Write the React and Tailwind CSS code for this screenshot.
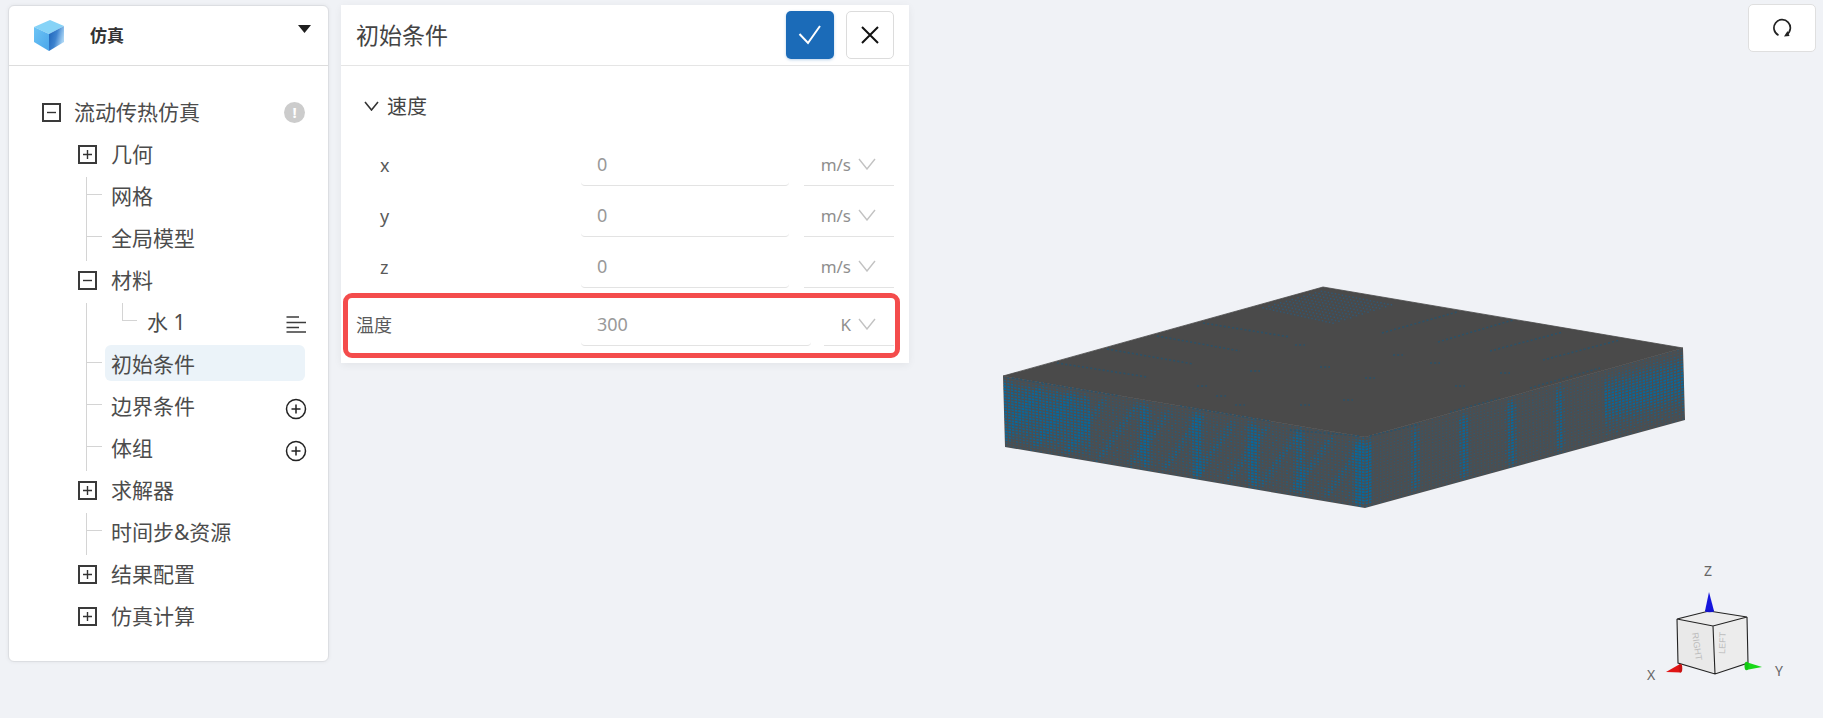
import React from "react";

const FONT = { fontFamily: '"Noto Sans","Noto Sans CJK SC",sans-serif' };

function lerp(a, b, t) { return [a[0] + (b[0] - a[0]) * t, a[1] + (b[1] - a[1]) * t]; }
function bump(u, c, w) { const d = (u - c) / w; return Math.exp(-d * d); }

function buildFace(tl, tr, br, bl, nu, nv, fn) {
  const levels = [[], [], [], []];
  for (let i = 0; i < nu; i++) {
    for (let j = 0; j < nv; j++) {
      const u0 = i / nu, u1 = (i + 1) / nu, v0 = j / nv, v1 = (j + 1) / nv;
      const um = (u0 + u1) / 2, vm = (v0 + v1) / 2;
      const wave = Math.sin(i * 2.39) * Math.cos(j * 1.7);
      const s = Math.max(0, Math.min(1, fn(um, vm) + wave * 0.08));
      const gu = (u1 - u0) * (0.42 - 0.34 * Math.sqrt(s));
      const gv = (v1 - v0) * (0.43 - 0.3 * Math.sqrt(s));
      const q = (u, v) => { const p = lerp(lerp(tl, tr, u), lerp(bl, br, u), v); return p[0].toFixed(1) + " " + p[1].toFixed(1); };
      const d = "M" + q(u0 + gu, v0 + gv) + "L" + q(u1 - gu, v0 + gv) + "L" + q(u1 - gu, v1 - gv) + "L" + q(u0 + gu, v1 - gv) + "Z";
      levels[s > 0.6 ? 3 : s > 0.42 ? 2 : s > 0.25 ? 1 : 0].push(d);
    }
  }
  return levels.map((l) => l.join(""));
}

const leftFn = (u, v) => {
  const edge = Math.min(1, 0.25 + v * 5) * Math.min(1, 0.3 + (1 - v) * 6);
  let b = 0.22 + 0.26 * Math.pow(Math.max(0, Math.sin(u * 70 + v * 9)), 3);
  if (u < 0.24) b += 0.42 * bump(v, 0.42, 0.45);
  b += 0.45 * bump(u, 0.39, 0.014) + 0.55 * bump(u, 0.535, 0.014) + 0.55 * bump(u, 0.69, 0.014) + 0.4 * bump(u, 0.82, 0.014) + 0.65 * bump(u, 0.985, 0.016);
  return b * edge;
};
const rightFn = (u, v) => {
  const edge = Math.min(1, 0.25 + v * 5) * Math.min(1, 0.3 + (1 - v) * 6);
  let b = 0.16;
  b += 0.45 * bump(u, 0.157, 0.013) + 0.55 * bump(u, 0.31, 0.013) + 0.55 * bump(u, 0.46, 0.013) + 0.45 * bump(u, 0.61, 0.013);
  if (u > 0.75) b += 0.52 * bump(v, 0.45, 0.32);
  if (u < 0.02) b += 0.55;
  return b * edge;
};

const LEFT = buildFace([1003, 376], [1365, 437], [1365, 508], [1005, 447], 104, 25, leftFn);
const RIGHT = buildFace([1365, 437], [1683, 348], [1685, 420], [1365, 508], 92, 25, rightFn);
const OP = [0.4, 0.65, 0.9, 1];

const DASHES = [
  [1057, 363, 1147, 377], [1107, 349, 1193, 364], [1157, 336, 1240, 351], [1203, 323, 1290, 337],
  [1382, 333, 1457, 312], [1438, 342, 1513, 320], [1490, 351, 1563, 332], [1543, 360, 1620, 340],
  [1012, 378, 1120, 396], [1180, 406, 1270, 421], [1290, 430, 1360, 436], [1370, 436, 1420, 424],
  [1450, 412, 1500, 398], [1530, 388, 1600, 368],
];
const SPECKS = [
  [1295, 345], [1393, 355], [1320, 367], [1365, 378], [1343, 400], [1430, 363], [1455, 386], [1500, 373], [1250, 371], [1197, 386], [1216, 396], [1300, 405], [1235, 405],
];

function diamondDots() {
  const out = [];
  const a = [1323, 288], b = [1400, 303], c = [1330, 325], d = [1253, 308];
  for (let i = 1; i < 22; i++) for (let j = 1; j < 12; j++) {
    const p = lerp(lerp(a, b, i / 22), lerp(d, c, i / 22), j / 12);
    out.push("M" + p[0].toFixed(1) + " " + p[1].toFixed(1) + "h1.5v1.5h-1.5z");
  }
  return out.join("");
}
const DOTS = diamondDots();

function Viewport() {
  return (
    <svg viewBox="909 0 914 718" className="absolute inset-0 w-[914px] h-[718px]">
      <polygon points="1003,376 1365,437 1365,508 1005,447" fill="#4c4e50" />
      <polygon points="1365,437 1683,348 1685,420 1365,508" fill="#4c4e50" />
      {LEFT.map((d, i) => <path key={i} d={d} fill="#05699f" opacity={OP[i]} />)}
      {RIGHT.map((d, i) => <path key={i} d={d} fill="#05699f" opacity={OP[i]} />)}
      <polygon points="1003,376 1323,287 1683,348 1365,437" fill="#4a4a4a" stroke="#4a4a4a" strokeWidth="0.8" />
      <path d={DOTS} fill="#2b5b7d" opacity="0.8" />
      {DASHES.map((l, i) => (
        <line key={i} x1={l[0]} y1={l[1]} x2={l[2]} y2={l[3]} stroke="#2b5269" strokeWidth="1.6" strokeDasharray="2 2.2" />
      ))}
      {SPECKS.map((p, i) => (
        <path key={i} d={`M${p[0]} ${p[1]}h10`} stroke="#2b5269" strokeWidth="1.6" strokeDasharray="2 2.2" />
      ))}

      {/* orientation cube */}
      <polygon points="1677,619 1709,611 1747,617 1713,626" fill="#ececec" />
      <polygon points="1677,619 1713,626 1715,674 1678,663" fill="#e9e9e9" />
      <polygon points="1713,626 1747,617 1748,663 1715,674" fill="#ececec" />
      <path d="M1677 619L1709 611L1747 617L1713 626ZM1677 619L1678 663L1715 674L1748 663L1747 617M1713 626L1715 674" fill="none" stroke="#222" strokeWidth="1.1" />
      <text transform="translate(1692,633) rotate(82)" fontSize="9" fill="#bdbdbd" fontFamily='"Liberation Sans",sans-serif'>RIGHT</text>
      <text transform="translate(1725,654) rotate(-88)" fontSize="9" fill="#bdbdbd" fontFamily='"Liberation Sans",sans-serif'>LEFT</text>
      <polygon points="1709,592 1705,611 1714,611" fill="#1515dd" />
      <ellipse cx="1709.5" cy="611" rx="4.5" ry="1.2" fill="#1212c8" />
      <polygon points="1666,672 1680,664 1681,672.5" fill="#e01515" />
      <ellipse cx="1680.5" cy="668.3" rx="1.8" ry="4.3" fill="#c81212" />
      <polygon points="1762,667 1746,662 1746,670" fill="#18d818" />
      <ellipse cx="1746.5" cy="666" rx="2" ry="4.2" fill="#14c814" />
      <text x="1708" y="576" fontSize="14" fill="#666" textAnchor="middle" fontFamily='"Noto Sans",sans-serif'>Z</text>
      <text x="1651" y="680" fontSize="14" fill="#666" textAnchor="middle" fontFamily='"Noto Sans",sans-serif'>X</text>
      <text x="1779" y="676" fontSize="14" fill="#666" textAnchor="middle" fontFamily='"Noto Sans",sans-serif'>Y</text>
    </svg>
  );
}

function Logo() {
  return (
    <svg width="32" height="33" viewBox="0 0 32 33" className="shrink-0">
      <defs>
        <linearGradient id="lg1" x1="0" y1="0" x2="1" y2="1">
          <stop offset="0" stopColor="#6cc4f5" />
          <stop offset="1" stopColor="#4ba6ea" />
        </linearGradient>
        <linearGradient id="lg2" x1="0" y1="0" x2="1" y2="0.4">
          <stop offset="0" stopColor="#1b62b8" />
          <stop offset="0.55" stopColor="#3d83cf" />
          <stop offset="1" stopColor="#a9d4f4" />
        </linearGradient>
      </defs>
      <polygon points="1,8 17,1 31,7 16,15" fill="#86d3f7" />
      <polygon points="1,8 16,15 16,32 1,23" fill="url(#lg1)" />
      <polygon points="16,15 31,7 31,23 16,32" fill="url(#lg2)" />
    </svg>
  );
}

function BoxIcon({ plus }) {
  return (
    <span className="w-[19px] h-[19px] border-2 border-[#3a3a3a] shrink-0 flex items-center justify-center">
      <svg width="11" height="11" viewBox="0 0 11 11">
        <path d={plus ? "M1 5.5H10M5.5 1V10" : "M1 5.5H10"} stroke="#333" strokeWidth="1.4" />
      </svg>
    </span>
  );
}

function PlusCircle() {
  return (
    <svg width="22" height="22" viewBox="0 0 22 22" className="shrink-0 translate-y-[4px] -mr-[2px]">
      <circle cx="11" cy="11" r="9.5" fill="none" stroke="#222" strokeWidth="1.5" />
      <path d="M6.5 11H15.5M11 6.5V15.5" stroke="#222" strokeWidth="1.5" />
    </svg>
  );
}

const LABEL = "text-[21px] leading-[42px] text-[#4c4c4c] whitespace-nowrap";

function Branch({ label, open }) {
  return (
    <div className="flex items-center h-[42px] pl-[69px] pr-[23px]">
      <BoxIcon plus={!open} />
      <span className={LABEL + " ml-[14px]"}>{label}</span>
    </div>
  );
}

function Leaf({ label, selected, extra }) {
  return (
    <div className="flex items-center h-[42px]">
      <span className="w-[15px] h-px bg-[#d4d4d4] shrink-0 -translate-y-[4px]"></span>
      <div className={"flex items-center justify-between flex-1 h-[36px] ml-[3px] pl-[6px] rounded-[6px] -translate-y-[3px] " + (selected ? "bg-[#ebf3f9]" : "")}>
        <span className={LABEL + " translate-y-[1px]"}>{label}</span>
        {extra}
      </div>
    </div>
  );
}

function Group({ children }) {
  return <div className="ml-[77px] mr-[23px] border-l border-[#d4d4d4] relative top-[2px]">{children}</div>;
}

function Sidebar() {
  return (
    <aside className="w-[321px] h-[657px] shrink-0 mt-[5px] ml-[8px] bg-white rounded-[6px] border border-[#dcdee2] shadow-[0_0_4px_rgba(0,0,0,0.06)]">
      <div className="h-[60px] border-b border-[#dddddd] flex items-center pl-[24px] relative rounded-t-[6px]">
        <Logo />
        <span className="ml-[25px] text-[17px] font-bold text-[#333]">仿真</span>
        <svg width="13" height="8" viewBox="0 0 13 8" className="absolute right-[17px] top-[19px]">
          <polygon points="0,0 13,0 6.5,8" fill="#1e1e1e" />
        </svg>
      </div>
      <div className="pt-[25px]">
        <div className="flex items-center h-[42px] pl-[33px] pr-[23px]">
          <BoxIcon plus={false} />
          <span className={LABEL + " ml-[13px] flex-1"}>流动传热仿真</span>
          <span className="w-[21px] h-[21px] rounded-full bg-[#cccccc] text-white text-[15px] font-bold flex items-center justify-center leading-none">!</span>
        </div>
        <div>
          <Branch label="几何" open={false} />
          <Group>
            <Leaf label="网格" />
            <Leaf label="全局模型" />
          </Group>
          <Branch label="材料" open />
          <Group>
            <div className="flex items-center h-[42px] pl-[35px] relative">
              <span className="absolute left-[35px] top-0 w-[15px] h-[18px] border-l border-b border-[#d4d4d4]"></span>
              <span className={LABEL + " ml-[25px] flex-1 -translate-y-[2px]"}>水 1</span>
              <svg width="20" height="17" viewBox="0 0 20 17" className="shrink-0 -mr-[1px]">
                <path d="M0.5 1H13M0.5 6.5H20M0.5 11.5H13M0.5 16H20" stroke="#3c3c3c" strokeWidth="1.5" fill="none" />
              </svg>
            </div>
            <Leaf label="初始条件" selected />
            <Leaf label="边界条件" extra={<PlusCircle />} />
            <Leaf label="体组" extra={<PlusCircle />} />
          </Group>
          <Branch label="求解器" open={false} />
          <Group>
            <Leaf label="时间步&资源" />
          </Group>
          <Branch label="结果配置" open={false} />
          <Branch label="仿真计算" open={false} />
        </div>
      </div>
    </aside>
  );
}

function Chevron({ color = "#c2c2c2" }) {
  return (
    <svg width="18" height="12" viewBox="0 0 18 12" className="shrink-0 ml-[7px] -translate-y-[2px]">
      <path d="M1 1L9 11L17 1" fill="none" stroke={color} strokeWidth="1.4" />
    </svg>
  );
}

function FormRow({ label, value, unit, hot }) {
  return (
    <div className={"flex items-center h-[40px] pr-[15px] " + (hot ? "mt-[18px] pl-[15px]" : "mb-[11px] pl-[39px]")}>
      <span className="flex-1 text-[18px] text-[#5a5a5a] -translate-y-px">{label}</span>
      <div className={"h-full border-b border-[#e3e3e3] rounded-b-[4px] flex items-center pl-[16px] text-[18px] text-[#999] " + (hot ? "w-[230px]" : "w-[208px]")}>
        <span className="-translate-y-px">{value}</span>
      </div>
      <div className={"h-full border-b border-[#e3e3e3] flex items-center justify-end pr-[18px] text-[17px] text-[#8f8f8f] " + (hot ? "w-[70px] ml-[13px]" : "w-[90px] ml-[15px]")}>
        <span className="-translate-y-px">{unit}</span>
        <Chevron />
      </div>
    </div>
  );
}

function Panel() {
  return (
    <section className="w-[568px] h-[358px] shrink-0 mt-[5px] ml-[12px] bg-white shadow-[0_2px_8px_rgba(0,0,0,0.06)] relative">
      <header className="h-[61px] border-b border-[#e5e5e5] flex items-center pl-[15px] pr-[15px]">
        <span className="flex-1 text-[23px] text-[#444]">初始条件</span>
        <button className="w-[48px] h-[48px] rounded-[5px] bg-[#1b6bb8] flex items-center justify-center shadow-[0_1px_3px_rgba(27,107,184,0.3)]">
          <svg width="48" height="48" viewBox="0 0 48 48">
            <path d="M13.5 23L22 32L34 15" fill="none" stroke="white" strokeWidth="2" />
          </svg>
        </button>
        <button className="w-[48px] h-[48px] ml-[12px] rounded-[5px] border border-[#dcdcdc] bg-white flex items-center justify-center">
          <svg width="18" height="18" viewBox="0 0 18 18">
            <path d="M1 1L17 17M17 1L1 17" fill="none" stroke="#111" strokeWidth="2" />
          </svg>
        </button>
      </header>
      <div className="h-[80px] flex items-center pl-[23px]">
        <svg width="15" height="10" viewBox="0 0 15 10" className="shrink-0">
          <path d="M1 1L7.5 9L14 1" fill="none" stroke="#333" strokeWidth="1.6" />
        </svg>
        <span className="ml-[8px] text-[20px] text-[#444] translate-y-px">速度</span>
      </div>
      <FormRow label="x" value="0" unit="m/s" />
      <FormRow label="y" value="0" unit="m/s" />
      <FormRow label="z" value="0" unit="m/s" />
      <FormRow label="温度" value="300" unit="K" hot />
      <div className="absolute left-[2px] top-[288px] w-[557px] h-[65px] border-[5px] border-[#f44c4c] rounded-[9px] pointer-events-none"></div>
    </section>
  );
}

export default function App() {
  return (
    <div className="w-full h-[718px] overflow-hidden bg-[#f0f2f6] flex relative" style={FONT}>
      <Sidebar />
      <Panel />
      <main className="relative flex-1 h-full">
        <Viewport />
        <button className="absolute top-[4px] right-[7px] w-[68px] h-[48px] rounded-[5px] border border-[#dfdfdf] bg-white flex items-center justify-center">
          <svg width="20" height="20" viewBox="0 0 20 20">
            <path d="M6.5 17.2A8.2 8.2 0 1 1 14.5 16.8" fill="none" stroke="#222" strokeWidth="1.7" />
            <polygon points="12,18.5 17.5,18 15.5,13" fill="#222" />
          </svg>
        </button>
      </main>
    </div>
  );
}
